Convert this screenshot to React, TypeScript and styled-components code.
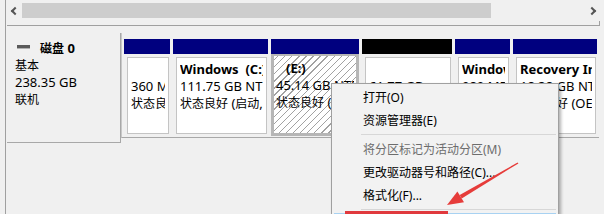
import React from "react"
import styled, { createGlobalStyle, css } from "styled-components"

const GlobalStyle = createGlobalStyle`
    html, body {
        margin: 0;
        padding: 0;
        background: #f0f0f0;
        overflow: hidden;
    }
    body {
        font-family: "Noto Sans", "Noto Sans CJK SC", sans-serif;
        font-size: 12px;
        color: #000;
    }
`

type Partition = {
    width: number
    title: string
    size: string
    status: string
    unallocated?: boolean
    selected?: boolean
    indent?: boolean
}

const partitions: Partition[] = [
    { width: 46, title: "", size: "360 MB NTFS", status: "状态良好 (恢复分区)" },
    { width: 95, title: "Windows\u00a0 (C:)", size: "111.75 GB NTFS", status: "状态良好 (启动, 页面文件, 故障转储)" },
    { width: 88, title: "(E:)", size: "45.14 GB NTFS", status: "状态良好 (基本数据分区)", selected: true, indent: true },
    { width: 90, title: "", size: "61.77 GB", status: "未分配", unallocated: true },
    { width: 55, title: "Windows RE", size: "980 MB NTFS", status: "状态良好 (OEM 分区)" },
    { width: 84, title: "Recovery Image", size: "18.38 GB NTFS", status: "状态良好 (OEM 分区)" },
]

type MenuEntry = { label: string; disabled?: boolean; separator?: boolean; active?: boolean }

const menu: MenuEntry[] = [
    { label: "打开(O)" },
    { label: "资源管理器(E)" },
    { label: "", separator: true },
    { label: "将分区标记为活动分区(M)", disabled: true },
    { label: "更改驱动器号和路径(C)..." },
    { label: "格式化(F)..." },
    { label: "", separator: true },
    { label: "扩展卷(X)...", active: true },
]

// the disk panel uses a larger Latin face than its Chinese text, so split the runs
function mixed(text: string) {
    return text.split(/([\u3000-\u9fff]+)/).map((part, i) =>
        /[\u3000-\u9fff]/.test(part) ? <Han key={i}>{part}</Han> : part
    )
}

export default function App() {
    return (
        <>
            <GlobalStyle />
            <Frame>
                <Body>
                    <ScrollRow>
                        <ScrollArrow>
                            <Chevron $dir="left" />
                        </ScrollArrow>
                        <Track>
                            <Thumb />
                        </Track>
                        <ScrollArrow>
                            <Chevron $dir="right" />
                        </ScrollArrow>
                    </ScrollRow>

                    <DiskRow>
                        <DiskLabel>
                            <LabelLine>
                                <DriveIcon />
                                <b>{mixed("磁盘 0")}</b>
                            </LabelLine>
                            <LabelLine>{mixed("基本")}</LabelLine>
                            <LabelLine>238.35 GB</LabelLine>
                            <LabelLine>{mixed("联机")}</LabelLine>
                        </DiskLabel>

                        <Strip>
                            {partitions.map((p, i) => (
                                <Column key={i} style={{ width: p.width }}>
                                    <Header $unallocated={p.unallocated} />
                                    <ColumnBody $selected={p.selected}>
                                        <Box $selected={p.selected}>
                                            <BoxLine $bold $indent={p.indent}>{p.title || "\u00a0"}</BoxLine>
                                            <BoxLine>{mixed(p.size)}</BoxLine>
                                            <BoxLine>{mixed(p.status)}</BoxLine>
                                        </Box>
                                    </ColumnBody>
                                </Column>
                            ))}
                        </Strip>
                    </DiskRow>
                </Body>

                <Menu>
                    {menu.map((m, i) =>
                        m.separator ? (
                            <Separator key={i} />
                        ) : (
                            <MenuItem key={i} $disabled={m.disabled} $active={m.active}>
                                {m.label}
                            </MenuItem>
                        )
                    )}
                </Menu>

                <Callout />

                <ArrowLayer width="604" height="214" viewBox="0 0 604 214">
                    <polygon
                        points="518.4,163.4 517.6,162.6 459.7,195.1 461.7,198.5"
                        fill="#e63c3a"
                    />
                    <polygon points="447,205 457.4,191.4 464,202.2" fill="#e63c3a" />
                </ArrowLayer>
            </Frame>
        </>
    )
}

const Frame = styled.div`
    position: relative;
    width: 604px;
    height: 214px;
    overflow: hidden;
    background: #f0f0f0;
    padding-left: 5px;
    box-sizing: border-box;
`

const Body = styled.div`
    height: 100%;
    border-left: 1px solid #a0a0a0;
    padding-left: 1px;
`

const ScrollRow = styled.div`
    position: relative;
    display: flex;
    align-items: flex-start;
    height: 22px;
    padding-top: 3px;
    margin-right: 4px;
    border-bottom: 1px solid #a0a0a0;

    &::after {
        content: "";
        position: absolute;
        right: 0;
        bottom: -1px;
        width: 1px;
        height: 5px;
        background: #a0a0a0;
    }
`

const ScrollArrow = styled.div`
    flex: 0 0 14px;
    height: 15px;
    display: flex;
    align-items: center;
    justify-content: center;
`

const Chevron = styled.span<{ $dir: "left" | "right" }>`
    display: block;
    width: 4px;
    height: 4px;
    border-left: 2px solid #555;
    border-bottom: 2px solid #555;
    transform: ${(p) => (p.$dir === "left" ? "translateX(1px) rotate(45deg)" : "translateX(-1px) rotate(-135deg)")};
`

const Track = styled.div`
    flex: 1;
    height: 15px;
    padding-left: 1px;
`

const Thumb = styled.div`
    width: 469px;
    height: 15px;
    background: #cdcdcd;
`

const DiskRow = styled.div`
    display: flex;
    margin-top: 7px;
    height: 110px;
    font-size: 13px;
`

const Han = styled.span`
    font-size: 12px;
`

const DiskLabel = styled.div`
    width: 105px;
    height: 102px;
    padding: 7px 0 0 8px;
    border-right: 1px solid #a8a8a8;
    border-bottom: 1px solid #a8a8a8;
`

const LabelLine = styled.div`
    display: flex;
    align-items: center;
    height: 17px;
    line-height: 17px;
    white-space: nowrap;
`

const DriveIcon = styled.span`
    display: inline-block;
    width: 13px;
    height: 3px;
    background: #5a5a5a;
    border-bottom: 1px solid #b0b0b0;
    margin: 0 10px 4px 2px;
`

const Strip = styled.div`
    display: flex;
    gap: 3px;
    height: 105px;
    padding: 6px 0 0 2px;
    box-sizing: border-box;
    border-left: 1px solid #c8c8c8;
    border-bottom: 1px solid #a8a8a8;
    width: 478px;
`

const Column = styled.div`
    display: flex;
    flex-direction: column;
    flex-shrink: 0;
`

const Header = styled.div<{ $unallocated?: boolean }>`
    height: 15px;
    background: ${(p) => (p.$unallocated ? "#000000" : "#00007f")};
`

const ColumnBody = styled.div<{ $selected?: boolean }>`
    height: 82px;
    box-sizing: border-box;
    padding: ${(p) => (p.$selected ? "0" : "3px 1px 2px 3px")};
`

const Box = styled.div<{ $selected?: boolean }>`
    height: 100%;
    box-sizing: border-box;
    overflow: hidden;
    background: #fff;
    border: 1px solid #c4c4c4;
    padding: 3px;
    ${(p) =>
        p.$selected &&
        css`
            border: 3px solid #b6b6b6;
            border-top-width: 2px;
            padding: 4px 2px;
            background: repeating-linear-gradient(-45deg, #ffffff 0 4px, #a2a2a2 4px 5px);
        `}
`

const BoxLine = styled.div<{ $bold?: boolean; $indent?: boolean }>`
    height: 17px;
    line-height: 17px;
    white-space: nowrap;
    overflow: hidden;
    font-weight: ${(p) => (p.$bold ? 700 : 400)};
    padding-left: ${(p) => (p.$indent ? "10px" : "0")};
`

const Menu = styled.div`
    position: absolute;
    left: 331px;
    top: 83px;
    width: 222px;
    height: 150px;
    padding: 2px;
    background: #f2f2f2;
    border: 1px solid #a0a0a0;
    box-shadow: 2px 2px 3px rgba(0, 0, 0, 0.3);
`

const MenuItem = styled.div<{ $disabled?: boolean; $active?: boolean }>`
    height: 23px;
    line-height: 23px;
    padding-left: 29px;
    box-sizing: border-box;
    white-space: nowrap;
    color: ${(p) => (p.$disabled ? "#6d6d6d" : "#000")};
    ${(p) =>
        p.$active &&
        css`
            background: #cce4f7;
            border: 1px solid #a8d2f2;
            line-height: 21px;
        `}
`

const Separator = styled.div`
    height: 6px;
    margin-left: 27px;
    box-sizing: border-box;
    padding-top: 2px;

    &::before {
        content: "";
        display: block;
        height: 1px;
        background: #d7d7d7;
    }
`

const Callout = styled.div`
    position: absolute;
    left: 345px;
    top: 211px;
    width: 97px;
    height: 20px;
    border: 3px solid #e0393d;
`

const ArrowLayer = styled.svg`
    position: absolute;
    left: 0;
    top: 0;
    pointer-events: none;
`
